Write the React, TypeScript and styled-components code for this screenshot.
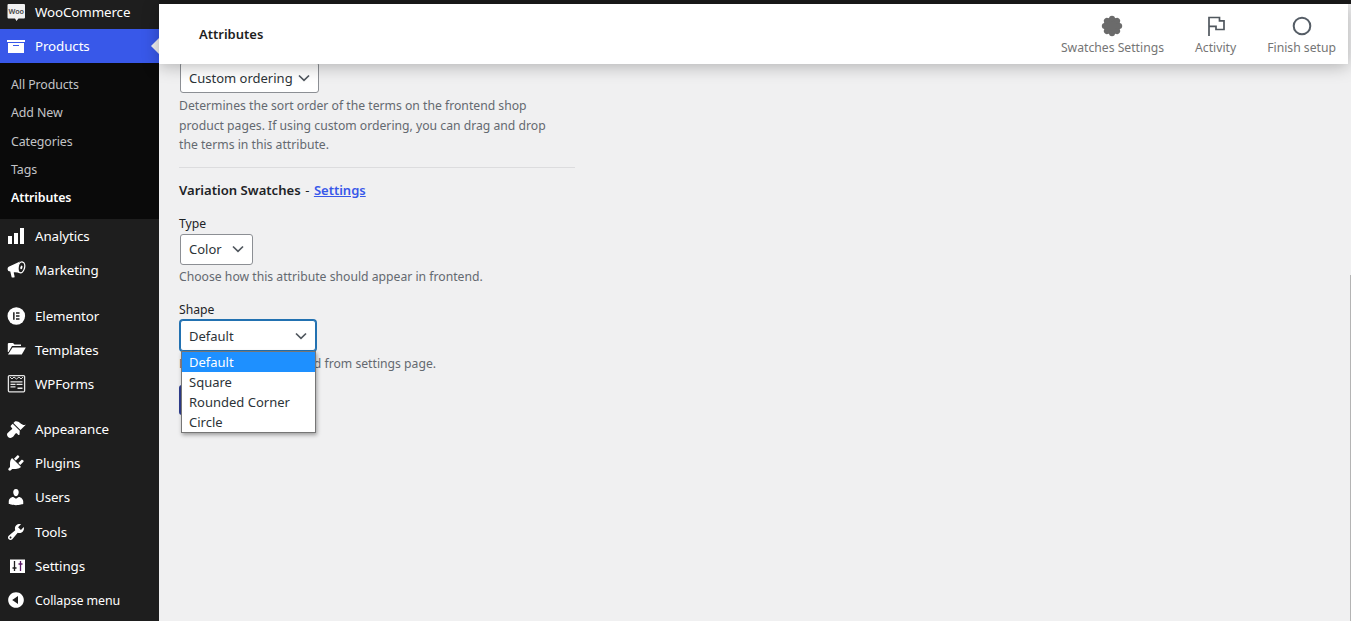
import React from "react";
import styled, { createGlobalStyle } from "styled-components";

const FONT = `"Noto Sans", "Open Sans", "Liberation Sans", sans-serif`;

const Global = createGlobalStyle`
  html, body { margin: 0; padding: 0; height: 100%; overflow: hidden; background: #f0f0f1; }
  #root { height: 100%; }
  * { box-sizing: border-box; }
  body { font-family: ${FONT}; font-size: 12.2px; color: #2c3338; }
`;

const Shell = styled.div`
  display: flex;
  width: 1351px;
  height: 621px;
  overflow: hidden;
  position: relative;
`;
const Sidebar = styled.nav`
  width: 159px;
  flex: none;
  background: #1e1e1e;
  overflow: hidden;
  color: #fff;
`;
const Row = styled.div<{ $active?: boolean; $clipped?: boolean; $small?: boolean }>`
  position: relative;
  display: flex;
  align-items: center;
  gap: 9px;
  height: 34.2px;
  padding-left: 6px;
  padding-top: ${(p) => (p.$small ? "1px" : "0")};
  font-size: ${(p) => (p.$small ? "12.4px" : "13.35px")};
  letter-spacing: -0.1px;
  color: #fff;
  background: ${(p) => (p.$active ? "#3858e9" : "transparent")};
  margin-top: ${(p) => (p.$clipped ? "-5.2px" : "0")};
`;
const Pointer = styled.span`
  position: absolute;
  right: 0;
  top: 9px;
  border-style: solid;
  border-width: 8px 8px 8px 0;
  border-color: transparent #f0f0f1 transparent transparent;
`;
const Sub = styled.div`
  background: #0a0a0a;
  padding: 8px 0 0 11px;
  height: 156px;
`;
const SubItem = styled.div<{ $current?: boolean }>`
  height: 28.2px;
  line-height: 28.2px;
  font-size: 12.4px;
  letter-spacing: -0.1px;
  color: ${(p) => (p.$current ? "#fff" : "#c3c4c7")};
  font-weight: ${(p) => (p.$current ? 600 : 400)};
`;
const Spacer = styled.div<{ $h: number }>`
  height: ${(p) => p.$h}px;
`;
const Main = styled.div`
  flex: 1;
  min-width: 0;
  display: flex;
  flex-direction: column;
  background: #f0f0f1;
`;
const TopStrip = styled.div`
  height: 4px;
  flex: none;
  background: #1a1a1a;
`;
const Header = styled.header`
  position: relative;
  z-index: 3;
  flex: none;
  height: 60px;
  margin-right: 3px;
  background: #fff;
  display: flex;
  align-items: center;
  justify-content: space-between;
  padding: 0 12px 0 40px;
  box-shadow: 0 2px 16px rgba(0, 0, 0, 0.28);
`;
const Title = styled.h1`
  margin: 0 0 1px;
  font-size: 13px;
  font-weight: 600;
  color: #1e1e1e;
`;
const Actions = styled.div`
  display: flex;
  gap: 31px;
`;
const Action = styled.div`
  display: flex;
  flex-direction: column;
  align-items: center;
  padding-top: 6px;
  height: 52px;
  font-size: 12.2px;
  line-height: 19px;
  color: #757575;
`;
const Content = styled.div`
  flex: 1;
  padding-left: 20px;
  position: relative;
  overflow: hidden;
`;
const Select = styled.div<{ $w: number; $focus?: boolean; $mt?: number }>`
  position: relative;
  width: ${(p) => p.$w}px;
  height: 31px;
  margin: ${(p) => p.$mt ?? 0}px 0 0 1px;
  padding: 0 8px;
  display: flex;
  align-items: center;
  justify-content: space-between;
  background: #fff;
  border: 1px solid ${(p) => (p.$focus ? "#2271b1" : "#8c8f94")};
  box-shadow: ${(p) => (p.$focus ? "0 0 0 1px #2271b1" : "none")};
  border-radius: 3px;
  font-size: 13px;
  color: #2c3338;
`;
const Desc = styled.p<{ $mt?: number }>`
  margin: ${(p) => p.$mt ?? 0}px 0 0;
  width: 372px;
  font-size: 12.2px;
  line-height: 19.5px;
  color: #646970;
`;
const Rule = styled.hr`
  width: 396px;
  height: 1px;
  margin: 12px 0 0;
  border: 0;
  background: #dcdcde;
`;
const SectionTitle = styled.div`
  margin-top: 12px;
  height: 20px;
  line-height: 20px;
  font-size: 13.1px;
  font-weight: 600;
  color: #1d2327;
`;
const TitleDash = styled.span`
  margin: 0 4.5px;
  font-weight: 400;
`;
const SettingsLink = styled.a`
  font-size: 13px;
  color: #3858e9;
  text-decoration: underline;
`;
const Label = styled.div<{ $mt: number }>`
  margin-top: ${(p) => p.$mt}px;
  height: 20px;
  line-height: 20px;
  font-size: 12.2px;
  color: #1d2327;
`;
const SaveButton = styled.div`
  margin-top: 11px;
  width: 100px;
  height: 30px;
  border-radius: 3px;
  background: #2f3e8f;
  color: #fff;
  font-size: 13px;
  line-height: 30px;
  text-align: center;
`;
const Menu = styled.ul`
  position: absolute;
  z-index: 2;
  left: 0;
  top: 30px;
  width: 135px;
  margin: 0;
  padding: 0;
  list-style: none;
  background: #fff;
  border: 1px solid #767676;
  box-shadow: 1px 2px 4px rgba(0, 0, 0, 0.35);
`;
const Option = styled.li<{ $on?: boolean }>`
  height: 20px;
  line-height: 20px;
  padding-left: 7px;
  font-size: 13px;
  color: ${(p) => (p.$on ? "#fff" : "#2c3338")};
  background: ${(p) => (p.$on ? "#1e90ff" : "#fff")};
`;
const ScrollThumb = styled.div`
  position: absolute;
  right: 0;
  top: 275px;
  bottom: 0;
  width: 1px;
  background: #b4b4b4;
`;

const Dash = ({ d }: { d: string }) => (
  <svg width="20" height="20" viewBox="0 0 20 20" fill="#fff" style={{ flex: "none" }}>
    <path fillRule="evenodd" d={d} />
  </svg>
);

const Chevron = ({ w = 12 }: { w?: number }) => (
  <svg width={w} height="8" viewBox="0 0 12 8" fill="none" stroke="#50575e" strokeWidth="1.7">
    <path d="M1 1.5 6 6.3 11 1.500" />
  </svg>
);

const WooIcon = () => (
  <svg width="20" height="20" viewBox="0 0 20 20" style={{ flex: "none" }}>
    <path fill="#f1f1f1" d="M2.500 2h15.500a1 1 0 0 1 1 1v12.500a1 1 0 0 1-1 1H12.500l-2 2.500-1.500-2.500H2.500a1 1 0 0 1-1-1V3a1 1 0 0 1 1-1z" />
    <text x="10.200" y="11.500" textAnchor="middle" fontSize="7.200" fontWeight="600" fill="#444" fontFamily={FONT}>Woo</text>
  </svg>
);
const ElementorIcon = () => (
  <svg width="20" height="20" viewBox="0 0 20 20" style={{ flex: "none" }}>
    <circle cx="10.300" cy="10" r="8.800" fill="#fff" />
    <path fill="#1e1e1e" d="M7.100 6.200h1.500v7.600H7.100zM10 6.200h3.500v1.500H10zM10 9.250h3.500v1.500H10zM10 12.300h3.500v1.500H10z" />
  </svg>
);
const MegaphoneIcon = () => (
  <svg width="20" height="20" viewBox="0 0 20 20" style={{ flex: "none" }}>
    <path fill="#fff" d="M14 1.600 2.700 6.800C1.400 7.400 1.200 9.800 2.300 11l2 .5 1.200 5.200c.1.600.6 1 1.200.9l1.300-.2c.5-.1.7-.5.6-1l-.9-4c2-.2 4.100.1 6.300.9C12 10 11.800 5 14 1.600z" />
    <ellipse cx="15.300" cy="7.400" rx="3.300" ry="5.500" transform="rotate(14 15.300 7.400)" fill="none" stroke="#fff" strokeWidth="1.300" />
    <ellipse cx="15.400" cy="7.400" rx="1" ry="2" transform="rotate(14 15.400 7.400)" fill="#fff" />
  </svg>
);
const FolderIcon = () => (
  <svg width="20" height="20" viewBox="0 0 20 20" style={{ flex: "none" }}>
    <path fill="#fff" d="M2.500 3h4.500l1.500 1.500H15V6H6L2.500 12H1.800V3.700z" />
    <path fill="#fff" d="M6.500 7.500H19.800L15.800 14.500H2z" />
  </svg>
);
const FormsIcon = () => (
  <svg width="20" height="20" viewBox="0 0 20 20" style={{ flex: "none" }}>
    <rect x="2.400" y="1.600" width="16.200" height="16.200" rx="1" fill="#1e1e1e" stroke="#e4e4e4" strokeWidth="1.300" />
    <path fill="none" stroke="#d8d8d8" strokeWidth="1" d="M4 3l2 2 2-2 2.500 2 2.500-2 2 2 2-2" />
    <path fill="#e8e8e8" d="M4.500 7.200h12v1.200h-12zM4.500 9.800h5v1.200h-5zM10.500 9.800h6v1.200h-6zM4.500 12.300h5v1.200h-5zM11.500 13.600h5v1.500h-5z" />
  </svg>
);
const SettingsIcon = () => (
  <svg width="20" height="20" viewBox="0 0 20 20" style={{ flex: "none" }}>
    <rect x="4" y="3.500" width="15" height="13.500" fill="#fff" />
    <path fill="none" stroke="#1e1e1e" strokeWidth="1.300" d="M8.500 5v10M6.500 12h4" />
    <path fill="none" stroke="#5a1a66" strokeWidth="1.300" d="M14.500 5v10M12.500 8h4" />
  </svg>
);
const FlowerIcon = () => (
  <svg width="24" height="24" viewBox="0 0 24 24" fill="#6b6b6b">
    <circle cx="12" cy="12" r="8.500" />
    {[0, 45, 90, 135, 180, 225, 270, 315].map((a) => (
      <circle key={a} cx="12" cy="4.800" r="3" transform={`rotate(${a} 12 12)`} />
    ))}
  </svg>
);
const FlagIcon = () => (
  <svg width="24" height="24" viewBox="0 0 24 24" fill="none" stroke="#50575e" strokeWidth="1.700">
    <path d="M5 22V3.500h10.500v3.300H20v8.700h-8v-3.200H5" />
  </svg>
);
const RingIcon = () => (
  <svg width="24" height="24" viewBox="0 0 24 24" fill="none" stroke="#555d66" strokeWidth="2">
    <circle cx="12" cy="12" r="8.300" />
  </svg>
);

const P = {
  archive: "M19 4v2H1V4h18zM2 7h16v10H2V7zm11 3V9H7v1h6z",
  chart: "M18 18V2h-4v16h4zm-6 0V7H8v11h4zm-6 0v-8H2v8h4z",
  brush:
    "M14.48 11.06L7.41 3.99l1.5-1.5c.5-.56 2.3-.47 3.51.32 1.21.8 1.43 1.28 2.91 2.1 1.18.64 2.45 1.26 4.45.85zm-.71.71L6.7 4.7 4.93 6.47c-.39.39-.39 1.02 0 1.41l1.06 1.06c.39.39.39 1.03 0 1.42-.6.6-1.43 1.11-2.21 1.69-.35.26-.7.53-1.01.84C1.43 13.71 1 14.65 1 15.6c0 .96.39 1.67 1.07 2.36.68.68 1.4 1.04 2.36 1.04.95 0 1.89-.43 2.64-1.18.31-.31.58-.66.84-1.01.58-.78 1.09-1.61 1.69-2.21.39-.39 1.03-.39 1.42 0l1.06 1.06c.39.39 1.02.39 1.41 0z",
  plug:
    "M13.11 4.36L9.87 7.6 8 5.73l3.24-3.24c.35-.34 1.05-.2 1.56.32.52.51.66 1.21.31 1.55zm-8 1.77l.91-1.12 9.01 9.01-1.19.84c-.71.71-2.63 1.16-3.82 1.16H6.14L4.9 17.26c-.59.59-1.54.59-2.12 0-.59-.58-.59-1.53 0-2.12l1.24-1.24v-3.88c0-1.13.4-3.19 1.09-3.89zm7.26 3.97l3.24-3.24c.34-.35 1.04-.21 1.55.31.52.51.66 1.21.31 1.55l-3.24 3.25z",
  user:
    "M10 9.25c-2.27 0-2.73-3.44-2.73-3.44C7 4.02 7.82 2 9.97 2c2.16 0 2.98 2.02 2.71 3.81 0 0-.41 3.44-2.68 3.44zm0 2.57L12.72 10c2.39 0 4.52 2.33 4.52 4.53v2.49s-3.65 1.13-7.24 1.13c-3.65 0-7.24-1.13-7.24-1.13v-2.49c0-2.25 1.94-4.48 4.47-4.48z",
  wrench:
    "M16.68 9.77c-1.34 1.34-3.3 1.67-4.95.99l-5.41 6.52c-.99.99-2.59.99-3.58 0s-.99-2.59 0-3.57l6.52-5.42c-.68-1.65-.35-3.61.99-4.95 1.28-1.28 3.12-1.62 4.72-1.06l-2.89 2.89 2.82 2.82 2.86-2.87c.53 1.58.18 3.39-1.08 4.65zM3.81 16.21c.4.39 1.04.39 1.43 0 .4-.4.4-1.04 0-1.43-.39-.4-1.03-.4-1.43 0-.39.39-.39 1.03 0 1.43z",
  collapse: "M10 2.16c4.33 0 7.84 3.51 7.84 7.84s-3.51 7.84-7.84 7.84S2.16 14.33 2.16 10 5.71 2.16 10 2.16zm2 11.72V6.12L6.18 9.97z",
};

export default function App() {
  return (
    <Shell>
      <Global />
      <Sidebar>
        <Row $clipped><WooIcon />WooCommerce</Row>
        <Row $active><Dash d={P.archive} />Products<Pointer /></Row>
        <Sub>
          <SubItem>All Products</SubItem>
          <SubItem>Add New</SubItem>
          <SubItem>Categories</SubItem>
          <SubItem>Tags</SubItem>
          <SubItem $current>Attributes</SubItem>
        </Sub>
        <Row><Dash d={P.chart} />Analytics</Row>
        <Row><MegaphoneIcon />Marketing</Row>
        <Spacer $h={11.4} />
        <Row><ElementorIcon />Elementor</Row>
        <Row><FolderIcon />Templates</Row>
        <Row><FormsIcon />WPForms</Row>
        <Spacer $h={10.4} />
        <Row><Dash d={P.brush} />Appearance</Row>
        <Row><Dash d={P.plug} />Plugins</Row>
        <Row><Dash d={P.user} />Users</Row>
        <Row><Dash d={P.wrench} />Tools</Row>
        <Row><SettingsIcon />Settings</Row>
        <Row $small><Dash d={P.collapse} />Collapse menu</Row>
      </Sidebar>
      <Main>
        <TopStrip />
        <Header>
          <Title>Attributes</Title>
          <Actions>
            <Action><FlowerIcon />Swatches Settings</Action>
            <Action><FlagIcon />Activity</Action>
            <Action><RingIcon />Finish setup</Action>
          </Actions>
        </Header>
        <Content>
          <Select $w={139} $mt={-2}>Custom ordering<Chevron /></Select>
          <Desc $mt={3}>
            Determines the sort order of the terms on the frontend shop product pages. If using custom ordering, you can drag and drop the terms in this attribute.
          </Desc>
          <Rule />
          <SectionTitle>
            Variation Swatches<TitleDash>-</TitleDash><SettingsLink href="#">Settings</SettingsLink>
          </SectionTitle>
          <Label $mt={14}>Type</Label>
          <Select $w={73}>Color<Chevron /></Select>
          <Desc $mt={2}>Choose how this attribute should appear in frontend.</Desc>
          <Label $mt={14}>Shape</Label>
          <Select $w={136} $focus>
            Default<Chevron />
            <Menu>
              <Option $on>Default</Option>
              <Option>Square</Option>
              <Option>Rounded Corner</Option>
              <Option>Circle</Option>
            </Menu>
          </Select>
          <Desc $mt={3}>Default shape is selected from settings page.</Desc>
          <SaveButton>Save</SaveButton>
        </Content>
      </Main>
      <ScrollThumb />
    </Shell>
  );
}
